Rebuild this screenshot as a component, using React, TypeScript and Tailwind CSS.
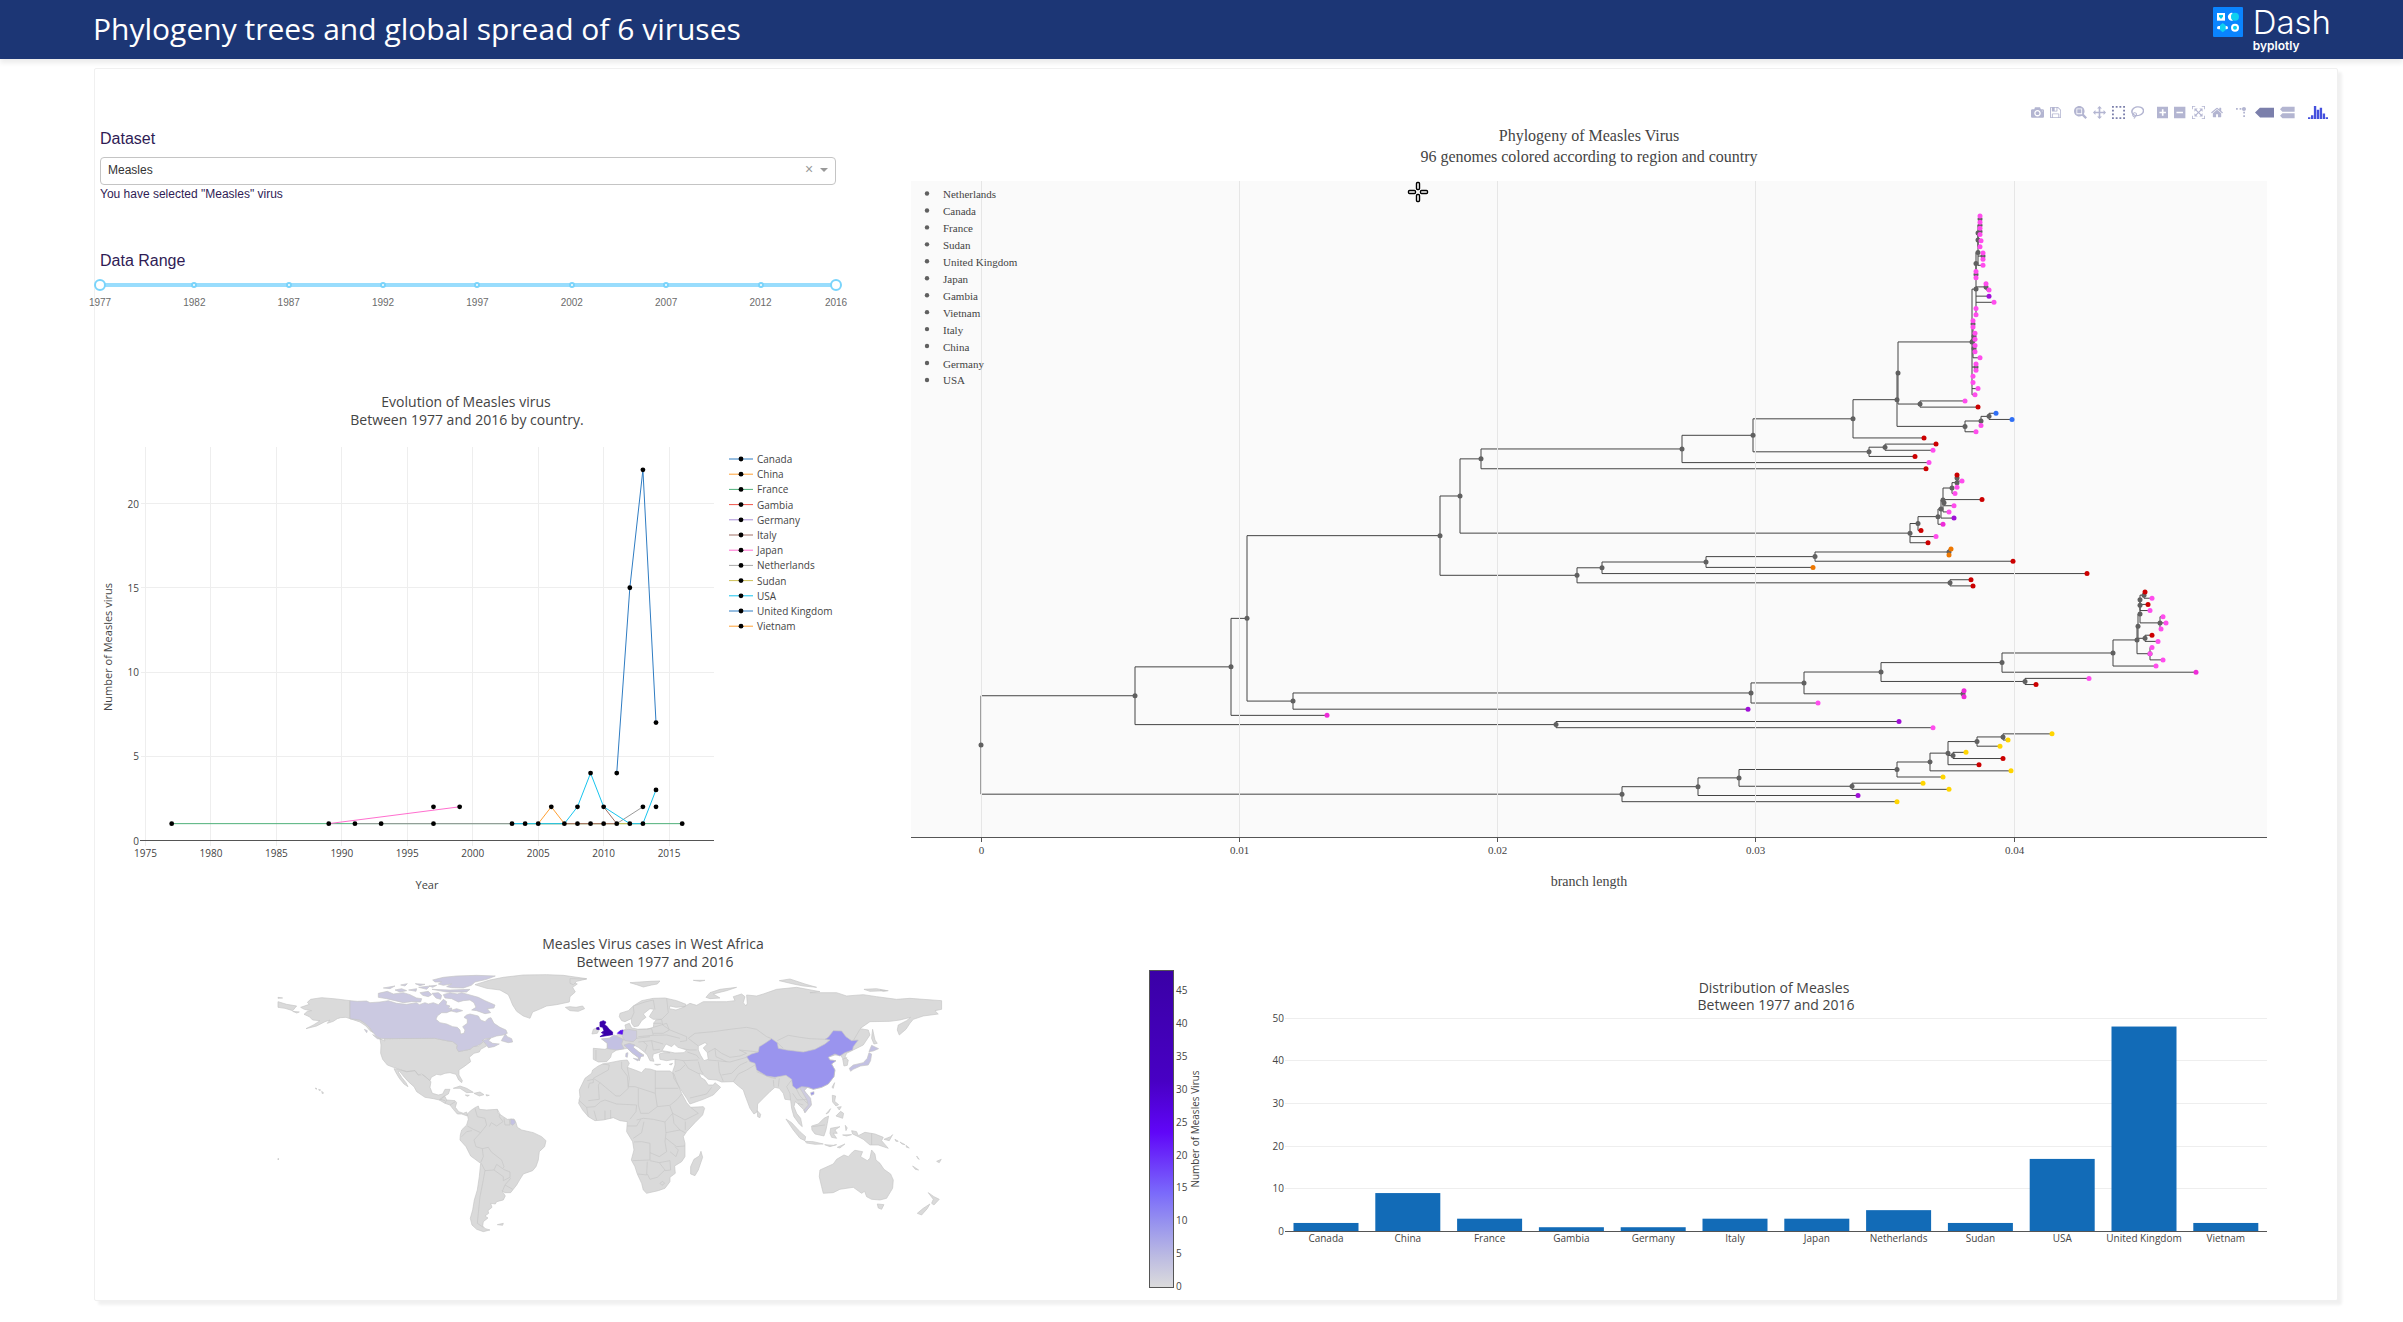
import React, { useState } from 'react';

/* ---------- shared data ---------- */

const COUNTRIES: { name: string; color: string; cases: number }[] = [
  { name: 'Canada', color: '#2f7cc2', cases: 2 },
  { name: 'China', color: '#ffa033', cases: 9 },
  { name: 'France', color: '#4fb07a', cases: 3 },
  { name: 'Gambia', color: '#f0564a', cases: 1 },
  { name: 'Germany', color: '#a98fd6', cases: 1 },
  { name: 'Italy', color: '#a07066', cases: 3 },
  { name: 'Japan', color: '#ff6fcf', cases: 3 },
  { name: 'Netherlands', color: '#a8a8a8', cases: 5 },
  { name: 'Sudan', color: '#cdbf55', cases: 2 },
  { name: 'USA', color: '#17c4ee', cases: 17 },
  { name: 'United Kingdom', color: '#2f7cc2', cases: 48 },
  { name: 'Vietnam', color: '#ffa033', cases: 2 },
];

/* ---------- header ---------- */

function DashLogo() {
  return (
    <a href="#" className="flex items-start gap-[10px] text-white" aria-label="Dash by plotly">
      <svg viewBox="0 0 90 90" className="mt-[7px] h-[30px] w-[30px]" aria-hidden="true">
        <rect width="90" height="90" rx="3" fill="#0a84ff" />
        <rect x="12" y="18" width="24" height="23" fill="#fff" />
        <path d="M18 25l3-2 3 2 3-2 3 2v4l-6 7-6-7z" fill="#00c8e6" />
        <path d="M60 18a12 12 0 1 0 0 23a16 16 0 0 1 0-23z" fill="#fff" />
        <circle cx="66" cy="29" r="12" fill="#0fd0f0" />
        <rect x="12" y="57" width="33" height="10" rx="5" fill="#fff" />
        <path d="M29 48l9 7v14l-9 7-8-7v-14z" fill="#0fd0f0" />
        <circle cx="66" cy="62" r="9" fill="#0fd0f0" stroke="#fff" strokeWidth="6" />
      </svg>
      <span className="flex flex-col pt-[5px]">
        <span className="font-['Inter'] text-[33px] leading-[34px] font-light">Dash</span>
        <span className="font-['Inter'] text-xs leading-[14px] font-semibold">byplotly</span>
      </span>
    </a>
  );
}

function Header() {
  return (
    <header className="relative flex h-[59px] justify-between bg-[#1c3675] pr-[72px] pl-[93px] shadow-[0_4px_5px_rgba(0,0,0,0.08)]">
      <h1 className="pt-[9px] font-['Open_Sans'] text-[30px] leading-[40px] font-normal text-white">
        Phylogeny trees and global spread of 6 viruses
      </h1>
      <DashLogo />
    </header>
  );
}

/* ---------- controls ---------- */

const FIRST_YEAR = 1977;
const LAST_YEAR = 2016;
const MARKS = [1977, 1982, 1987, 1992, 1997, 2002, 2007, 2012, 2016];

const THUMB =
  'pointer-events-none absolute top-0 -left-[6px] m-0 h-[12px] w-[calc(100%+12px)] appearance-none bg-transparent ' +
  '[&::-webkit-slider-thumb]:pointer-events-auto [&::-webkit-slider-thumb]:h-[12px] [&::-webkit-slider-thumb]:w-[12px] ' +
  '[&::-webkit-slider-thumb]:appearance-none [&::-webkit-slider-thumb]:rounded-full [&::-webkit-slider-thumb]:border-2 ' +
  '[&::-webkit-slider-thumb]:border-solid [&::-webkit-slider-thumb]:border-[#7ad4fb] [&::-webkit-slider-thumb]:bg-white';

function YearSlider() {
  const [from, setFrom] = useState(FIRST_YEAR);
  const [to, setTo] = useState(LAST_YEAR);
  const pct = (y: number) => ((y - FIRST_YEAR) / (LAST_YEAR - FIRST_YEAR)) * 100;
  return (
    <div>
      <div className="relative mt-[6px] h-[12px]">
        <div className="absolute inset-x-0 top-[4px] h-[4px] rounded-full bg-[#e9e9e9]" />
        <div
          className="absolute top-[4px] h-[4px] bg-[#99ddfd]"
          style={{ left: `${pct(from)}%`, width: `${pct(to) - pct(from)}%` }}
        />
        {MARKS.slice(1, -1).map((y) => (
          <span
            key={y}
            className="absolute top-[3px] h-[6px] w-[6px] -translate-x-1/2 rounded-full border-2 border-[#7ad4fb] bg-white"
            style={{ left: `${pct(y)}%` }}
          />
        ))}
        <input
          type="range"
          aria-label="First year"
          min={FIRST_YEAR}
          max={LAST_YEAR}
          value={from}
          onChange={(e) => setFrom(Math.min(Number(e.target.value), to))}
          className={THUMB}
        />
        <input
          type="range"
          aria-label="Last year"
          min={FIRST_YEAR}
          max={LAST_YEAR}
          value={to}
          onChange={(e) => setTo(Math.max(Number(e.target.value), from))}
          className={THUMB}
        />
      </div>
      <div className="relative mt-[4px] h-4 text-[10px] leading-4 text-[#6b6b6b]">
        {MARKS.map((y) => (
          <span key={y} className="absolute -translate-x-1/2" style={{ left: `${pct(y)}%` }}>
            {y}
          </span>
        ))}
      </div>
    </div>
  );
}

function Controls() {
  const [virus, setVirus] = useState('Measles');
  return (
    <section className="pt-[58px] pr-[9px] pb-[74px] pl-[5px] font-['Liberation_Sans'] text-[#2f1c55]">
      <label htmlFor="dataset" className="block text-base leading-6">
        Dataset
      </label>
      <div className="relative mt-[6px]">
        <select
          id="dataset"
          value={virus}
          onChange={(e) => setVirus(e.target.value)}
          className="block h-[28px] w-full appearance-none rounded-[4px] border border-[#c4c4c4] bg-white pb-[2px] pl-[7px] text-xs text-[#333]"
        >
          {['Measles', 'Ebola', 'Zika', 'Dengue', 'Lassa', 'Mumps'].map((v) => (
            <option key={v}>{v}</option>
          ))}
        </select>
        <button
          type="button"
          aria-label="Clear"
          className="absolute top-[5px] right-[22px] h-[14px] w-[10px] text-sm leading-[14px] text-[#999]"
        >
          ×
        </button>
        <svg viewBox="0 0 8 4" className="pointer-events-none absolute top-[11px] right-[8px] h-[4px] w-[8px]">
          <path d="M0 0h8l-4 4z" fill="#999" />
        </svg>
      </div>
      <p className="mt-px text-xs leading-4">You have selected "{virus}" virus</p>
      <h2 className="mt-[47px] text-base leading-6 font-normal">Data Range</h2>
      <YearSlider />
    </section>
  );
}

/* ---------- line chart ---------- */

const LINES: { color: string; pts: [number, number][] }[] = [
  { color: '#4fb07a', pts: [[1977, 1], [1989, 1], [2004, 1], [2016, 1]] },
  { color: '#ff6fcf', pts: [[1989, 1], [1999, 2]] },
  { color: '#9a9a9a', pts: [[1991, 1], [1993, 1], [1997, 1], [2003, 1], [2011, 1], [2013, 2]] },
  { color: '#cdbf55', pts: [[2004, 1], [2012, 1], [2013, 1]] },
  { color: '#a07066', pts: [[2007, 1], [2010, 1], [2011, 1]] },
  { color: '#a07066', pts: [[2010, 2], [2011, 1]] },
  { color: '#ffa033', pts: [[2005, 1], [2006, 2], [2007, 1]] },
  { color: '#17c4ee', pts: [[2003, 1], [2005, 1], [2007, 1], [2008, 2], [2009, 4], [2010, 2], [2012, 1], [2013, 1], [2014, 3]] },
  { color: '#2f7cc2', pts: [[2011, 4], [2012, 15], [2013, 22], [2014, 7]] },
];

const DOTS: [number, number][] = [
  ...[1977, 1989, 1991, 1993, 1997, 2003, 2004, 2005, 2007, 2008, 2009, 2010, 2011, 2012, 2013, 2016].map(
    (y): [number, number] => [y, 1],
  ),
  ...[1997, 1999, 2006, 2008, 2010, 2013, 2014].map((y): [number, number] => [y, 2]),
  [2014, 3],
  [2009, 4],
  [2011, 4],
  [2014, 7],
  [2012, 15],
  [2013, 22],
];

function EvolutionChart() {
  const X = (yr: number) => 145.5 + (yr - 1975) * 13.09;
  const Y = (n: number) => 840.5 - n * 16.85;
  return (
    <svg
      viewBox="95 385 750 520"
      className="block h-auto w-full font-['Open_Sans']"
      role="img"
      aria-label="Evolution of Measles virus"
      fill="#444"
    >
      <g fontSize="14" textAnchor="middle">
        <text x="466" y="407">Evolution of Measles virus</text>
        <text x="467" y="425">Between 1977 and 2016 by country.</text>
      </g>
      <g stroke="#eee" shapeRendering="crispEdges">
        {[1975, 1980, 1985, 1990, 1995, 2000, 2005, 2010, 2015].map((y) => (
          <path key={y} d={`M${X(y)} 447V846`} />
        ))}
        {[5, 10, 15, 20].map((n) => (
          <path key={n} d={`M141 ${Y(n)}H714`} />
        ))}
      </g>
      <path d="M140 840.5H714" stroke="#555" shapeRendering="crispEdges" />
      {LINES.map((l, i) => (
        <polyline key={i} points={l.pts.map(([a, b]) => `${X(a)},${Y(b)}`).join(' ')} fill="none" stroke={l.color} />
      ))}
      {DOTS.map(([a, b], i) => (
        <circle key={i} cx={X(a)} cy={Y(b)} r="2.4" fill="#000" />
      ))}
      <g fontSize="10">
        {[1975, 1980, 1985, 1990, 1995, 2000, 2005, 2010, 2015].map((y) => (
          <text key={y} x={X(y)} y="857" textAnchor="middle">
            {y}
          </text>
        ))}
        {[0, 5, 10, 15, 20].map((n) => (
          <text key={n} x="139" y={Y(n) + 4} textAnchor="end">
            {n}
          </text>
        ))}
        {COUNTRIES.map((c, i) => (
          <g key={c.name}>
            <path d={`M729 ${459 + i * 15.2}h24`} stroke={c.color} />
            <circle cx="741" cy={459 + i * 15.2} r="2.4" fill="#000" />
            <text x="757" y={463 + i * 15.2}>
              {c.name}
            </text>
          </g>
        ))}
      </g>
      <g fontSize="11" textAnchor="middle">
        <text x="427" y="889">Year</text>
        <text transform="translate(112 647) rotate(-90)">Number of Measles virus</text>
      </g>
    </svg>
  );
}

/* ---------- phylogeny tree ---------- */

const PINK = '#ff4ded';
const MAG = '#ee2bd8';
const RED = '#cc0000';
const PURPLE = '#a010d8';
const BLUE = '#2f6ff5';
const ORANGE = '#ee7700';
const YELLOW = '#ffd500';

type Tree = [number, string] | [number, Tree[]];
const p = (...xs: number[]): Tree[] => xs.map((x): Tree => [x, PINK]);

const TOP_CLADE: Tree = [1972, [
  [1976, [
    [1976, [
      [1978, [
        [1978, [[1978, [[1980, [[1980, p(1980, 1980)], [1980, p(1980, 1980)]]], [1981, PINK]]], [1980, PINK]]],
        [1983, p(1983, 1983)],
        [1983, PINK],
      ]],
      [1976, p(1976, 1976)],
    ]],
    [1986, p(1986, 1989)],
    [1989, PURPLE],
    [1994, PINK],
    ...p(1976, 1976),
  ]],
  [1973, [[1973, p(1973, 1973)], [1974, p(1975, 1975)], [1974, p(1975, 1975)], [1980, PINK]]],
  [1976, p(1976, 1976)],
  ...p(1973, 1973, 1978, 1975),
]];

const UPPER: Tree = [1440, [
  [1460, [
    [1481, [
      [1682, [
        [1753, [
          [1853, [
            [1897, [
              [1898, [TOP_CLADE, [1920, [[1965, PINK], [1978, RED]]]]],
              [1965, [[1981, [[1989, [[1996, BLUE], [2012, BLUE]]], [1981, PINK]]], [1976, PINK]]],
            ]],
            [1924, RED],
          ]],
          [1869, [[1885, [[1936, RED], [1933, PINK]]], [1915, RED]]],
        ]],
        [1929, PINK],
      ]],
      [1926, RED],
    ]],
    [1910, [
      [1918, [
        [1938, [
          [1941, [
            [1943, [
              [1952, [[1957, [[1957, [[1957, RED], [1962, PINK]]], [1957, PINK]]], [1955, PINK]]],
              [1944, [[1982, RED], [1954, PINK]]],
              [1949, PINK],
            ]],
            [1954, PURPLE],
          ]],
          [1943, MAG],
        ]],
        [1921, RED],
      ]],
      [1936, PINK],
      [1928, RED],
    ]],
  ]],
  [1577, [
    [1602, [
      [1706, [[1815, [[1949, [[1951, ORANGE], [1949, ORANGE]]], [2013, RED]]], [1813, ORANGE]]],
      [2087, RED],
    ]],
    [1950, [[1971, RED], [1973, RED]]],
  ]],
]];

const MIDDLE: Tree = [1293, [
  [1751, [
    [1804, [
      [1881, [
        [2002, [
          [2113, [
            [2137, [
              [2138, [
                [2140, [
                  [2140, [[2140, [[2144, [[2145, RED], [2152, PINK]]], [2148, RED]]], [2150, PINK]]],
                  [2160, p(2163, 2166, 2161)],
                ]],
                [2145, [[2152, RED], [2158, PINK]]],
              ]],
              [2150, p(2152, 2150, 2163)],
            ]],
            [2156, PINK],
          ]],
          [2196, MAG],
        ]],
        [2025, [[2089, PINK], [2036, RED]]],
      ]],
      [1963, [[1964, MAG], [1964, MAG]]],
    ]],
    [1818, PINK],
  ]],
  [1748, PURPLE],
]];

const LOWER: Tree = [1622, [
  [1698, [
    [1739, [
      [1897, [
        [1930, [
          [1948, [
            [1977, [[2003, [[2052, YELLOW], [2008, YELLOW]]], [2000, YELLOW]]],
            [1953, [[1966, YELLOW], [2003, RED]]],
            [1979, RED],
          ]],
          [2011, YELLOW],
        ]],
        [1943, YELLOW],
      ]],
      [1852, [[1923, YELLOW], [1949, YELLOW]]],
    ]],
    [1858, PURPLE],
  ]],
  [1897, YELLOW],
]];

const ROOT: Tree = [981, [
  [1135, [[1231, [[1247, [UPPER, MIDDLE]], [1327, MAG]]], [1556, [[1899, PURPLE], [1933, PINK]]]]],
  LOWER,
]];

interface Laid {
  lines: string[];
  nodes: { x: number; y: number; color: string }[];
}

/* Leaves take evenly spaced rows; each parent sits midway between its outer children. */
function layTree(root: Tree, top: number, step: number): Laid {
  const out: Laid = { lines: [], nodes: [] };
  let row = 0;
  const place = (t: Tree): number => {
    const [x, rest] = t;
    if (typeof rest === 'string') {
      const y = top + step * row++;
      out.nodes.push({ x, y, color: rest });
      return y;
    }
    const ys = rest.map((c) => {
      const y = place(c);
      out.lines.push(`M${x} ${y}H${c[0]}`);
      return y;
    });
    const first = ys[0];
    const last = ys[ys.length - 1];
    out.lines.push(`M${x} ${first}V${last}`);
    const mid = (first + last) / 2;
    out.nodes.unshift({ x, y: mid, color: '#606060' });
    return mid;
  };
  place(root);
  return out;
}

const TREE = layTree(ROOT, 216, 6.165);

const TREE_LEGEND = [
  'Netherlands', 'Canada', 'France', 'Sudan', 'United Kingdom', 'Japan',
  'Gambia', 'Vietnam', 'Italy', 'China', 'Germany', 'USA',
];

function PhylogenyChart() {
  const ticks: [number, string][] = [[981.5, '0'], [1239.5, '0.01'], [1497.5, '0.02'], [1755.5, '0.03'], [2014.5, '0.04']];
  return (
    <svg
      viewBox="845 120 1492 785"
      className="block h-auto w-full font-['Liberation_Serif']"
      role="img"
      aria-label="Phylogeny of Measles Virus"
      fill="#444"
    >
      <rect x="911" y="181" width="1356" height="656" fill="#fafafa" />
      <path d={TREE.lines.join('')} fill="none" stroke="#444" />
      <g stroke="#e6e6e6" shapeRendering="crispEdges">
        {ticks.map(([x]) => (
          <path key={x} d={`M${x} 181V837`} />
        ))}
      </g>
      <g stroke="#555" shapeRendering="crispEdges">
        <path d="M911 837.5H2267" />
        {ticks.map(([x]) => (
          <path key={x} d={`M${x} 838v4`} />
        ))}
      </g>
      {TREE.nodes.map((n, i) => (
        <circle key={i} cx={n.x} cy={n.y} r="2.5" fill={n.color} />
      ))}
      <g fontSize="16" textAnchor="middle">
        <text x="1589" y="141">Phylogeny of Measles Virus</text>
        <text x="1589" y="162">96 genomes colored according to region and country</text>
      </g>
      <g fontSize="11">
        {TREE_LEGEND.map((c, i) => (
          <g key={c}>
            <circle cx="927" cy={193.5 + i * 16.95} r="2.2" fill="#606060" />
            <text x="943" y={198 + i * 16.95}>
              {c}
            </text>
          </g>
        ))}
        {ticks.map(([x, t]) => (
          <text key={t} x={x} y="854" textAnchor="middle">
            {t}
          </text>
        ))}
      </g>
      <text x="1589" y="886" fontSize="14" textAnchor="middle">
        branch length
      </text>
      <g fill="#fff" stroke="#000" strokeWidth="1.4">
        <rect x="1416.5" y="182.5" width="3" height="7" rx="1" />
        <rect x="1416.5" y="194.5" width="3" height="7" rx="1" />
        <rect x="1408.5" y="190.5" width="7" height="3" rx="1" />
        <rect x="1420.5" y="190.5" width="7" height="3" rx="1" />
      </g>
    </svg>
  );
}

/* ---------- toolbar ---------- */

interface Tool {
  label: string;
  w: number;
  d: string;
  active?: boolean;
  spike?: boolean;
  brand?: boolean;
}

const TOOLS: Tool[][] = [
  [
    { label: 'Download plot as a png', w: 1000, d: 'm500 450c-83 0-150-67-150-150 0-83 67-150 150-150 83 0 150 67 150 150 0 83-67 150-150 150z m400 150h-120c-16 0-34 13-39 29l-31 93c-6 15-23 28-40 28h-340c-16 0-34-13-39-28l-31-94c-6-15-23-28-40-28h-120c-55 0-100-45-100-100v-450c0-55 45-100 100-100h800c55 0 100 45 100 100v450c0 55-45 100-100 100z m-400-550c-138 0-250 112-250 250 0 138 112 250 250 250 138 0 250-112 250-250 0-138-112-250-250-250z m365 380c-19 0-35 16-35 35 0 19 16 35 35 35 19 0 35-16 35-35 0-19-16-35-35-35z' },
    { label: 'Save and edit plot', w: 857, d: 'm214-7h429v214h-429v-214z m500 0h72v500q0 8-6 21t-11 20l-157 156q-5 6-19 12t-22 5v-232q0-22-15-38t-38-16h-322q-22 0-37 16t-16 38v232h-72v-714h72v232q0 22 16 38t37 16h465q22 0 38-16t15-38v-232z m-214 518v178q0 8-5 13t-13 6h-107q-7 0-13-6t-5-13v-178q0-7 5-13t13-5h107q7 0 13 5t5 13z m357-18v-518q0-22-15-38t-38-16h-750q-23 0-38 16t-16 38v750q0 22 16 38t38 16h517q23 0 50-12t42-26l156-157q16-15 27-42t11-49z' },
  ],
  [
    { label: 'Zoom', w: 1000, d: 'm1000-25l-250 251c40 63 63 138 63 218 0 224-182 406-407 406-224 0-406-182-406-406s183-406 407-406c80 0 155 22 218 62l250-250 125 125z m-812 250l0 438 437 0 0-438-437 0z m62 375l313 0 0-312-313 0 0 312z' },
    { label: 'Pan', w: 1000, d: 'm1000 350l-187 188 0-125-250 0 0 250 125 0-188 187-187-187 125 0 0-250-250 0 0 125-188-188 186-187 0 125 252 0 0-250-125 0 187-188 188 188-125 0 0 250 250 0 0-126 187 188z' },
    { label: 'Box select', w: 1000, active: true, d: 'm0 850l0-143 143 0 0 143-143 0z m286 0l0-143 143 0 0 143-143 0z m285 0l0-143 143 0 0 143-143 0z m286 0l0-143 143 0 0 143-143 0z m-857-286l0-143 143 0 0 143-143 0z m857 0l0-143 143 0 0 143-143 0z m-857-285l0-143 143 0 0 143-143 0z m857 0l0-143 143 0 0 143-143 0z m-857-286l0-143 143 0 0 143-143 0z m286 0l0-143 143 0 0 143-143 0z m285 0l0-143 143 0 0 143-143 0z m286 0l0-143 143 0 0 143-143 0z' },
    { label: 'Lasso select', w: 1031, d: 'm1018 538c-36 207-290 336-568 286-277-48-473-256-436-463 10-57 36-108 76-151-13-66 11-137 68-183 34-28 75-41 114-42l-55-70 0 0c-2-1-3-2-4-3-10-14-8-34 5-45 14-11 34-8 45 4 1 1 2 3 2 5l0 0 113 140c16 11 31 24 45 40 4 3 6 7 8 11 48-3 100 0 151 9 278 48 473 255 436 462z m-624-379c-80 14-149 48-197 96 42 42 109 47 156 9 33-26 47-66 41-105z m-187-74c-19 16-33 37-39 60 50-32 109-55 174-68-42-25-95-24-135 8z m360 75c-34-7-69-9-102-8 8 62-16 128-68 170-73 59-175 54-244-5-9 20-16 40-20 61-28 159 121 317 333 354s407-60 434-217c28-159-121-318-333-355z' },
  ],
  [
    { label: 'Zoom in', w: 875, d: 'm1 787l0-875 875 0 0 875-875 0z m687-500l-187 0 0-187-125 0 0 187-188 0 0 125 188 0 0 187 125 0 0-187 187 0 0-125z' },
    { label: 'Zoom out', w: 875, d: 'm0 788l0-876 875 0 0 876-875 0z m688-500l-500 0 0 125 500 0 0-125z' },
    { label: 'Autoscale', w: 1000, d: 'm250 850l-187 0-63 0 0-62 0-188 63 0 0 188 187 0 0 62z m688 0l-188 0 0-62 188 0 0-188 62 0 0 188 0 62-62 0z m-875-938l0 188-63 0 0-188 0-62 63 0 187 0 0 62-187 0z m875 188l0-188-188 0 0-62 188 0 62 0 0 62 0 188-62 0z m-125 188l-1 0-93-94-156 156 156 156 92-93 2 0 0 250-250 0 0-2 93-92-156-156-156 156 94 92 0 2-250 0 0-250 0 0 93 93 157-156-157-156-93 94 0 0 0-250 250 0 0 0-94 93 156 157 156-157-93-93 0 0 250 0 0 250z' },
    { label: 'Reset axes', w: 929, d: 'm786 296v-267q0-15-11-26t-25-10h-214v214h-143v-214h-214q-15 0-25 10t-11 26v267q0 1 0 2t0 2l321 264 321-264q1-1 1-4z m124 39l-34-41q-5-5-12-6h-2q-7 0-12 3l-386 322-386-322q-7-4-13-4-7 2-12 7l-35 41q-4 5-3 13t6 12l401 334q18 15 42 15t43-15l136-114v109q0 8 5 13t13 5h107q8 0 13-5t5-13v-227l122-102q5-5 6-12t-4-13z' },
  ],
  [
    { label: 'Toggle spike lines', w: 1000, spike: true, d: 'M512 409c0-57-46-104-103-104-57 0-104 47-104 104 0 57 47 103 104 103 57 0 103-46 103-103z m-327-39l92 0 0 92-92 0z m-185 0l92 0 0 92-92 0z m370-186l92 0 0 93-92 0z m0-184l92 0 0 92-92 0z' },
    { label: 'Show closest data on hover', w: 1500, active: true, d: 'm375 725l0 0-375-375 375-374 0-1 1125 0 0 750-1125 0z' },
    { label: 'Compare data on hover', w: 1125, d: 'm187 786l0 2-187-188 188-187 0 0 937 0 0 373-938 0z m0-499l0 1-187-188 188-188 0 0 937 0 0 376-938-1z' },
  ],
  [
    { label: 'Produced with Plotly', w: 1542, brand: true, d: 'm0-10h182v-140h-182v140z m228 146h183v-286h-183v286z m225 714h182v-1000h-182v1000z m225-285h182v-715h-182v715z m225 142h183v-857h-183v857z m231-428h182v-429h-182v429z m225-291h183v-138h-183v138z' },
  ],
];

function ModeBar() {
  return (
    <div className="flex h-[51px] items-end justify-end gap-[13px] pr-[9px] pb-[1px]" role="toolbar" aria-label="Plot tools">
      {TOOLS.map((group, g) => (
        <div key={g} className="flex gap-[6px]">
          {group.map((t) => (
            <button key={t.label} type="button" aria-label={t.label} className="block">
              <svg
                viewBox={`0 0 ${t.w} 1000`}
                className="block h-[13px] w-auto"
                fill={t.brand ? '#4450dd' : t.active ? '#7b7fab' : '#b3b5d1'}
              >
                <path d={t.d} transform={t.spike ? 'matrix(1.5 0 0 -1.5 0 850)' : 'matrix(1 0 0 -1 0 850)'} />
              </svg>
            </button>
          ))}
        </div>
      ))}
    </div>
  );
}

/* ---------- world map ---------- */

const CANADA =
  'M240 92L262 94 290 93 300 98 330 96 355 92 380 100 410 103 440 98 448 104 465 98 475 102 490 98 505 104 513 96 520 88 530 95 528 104 540 108 535 115 545 114 545 122 530 128 515 128 502 138 498 148 510 158 530 162 548 170 562 172 570 180 572 192 582 190 585 180 578 170 592 160 592 148 582 142 590 135 600 132 625 138 632 150 645 155 655 145 663 143 672 160 690 172 708 180 712 190 700 195 680 198 660 205 645 206 636 212 650 208 662 205 656 212 668 220 688 222 672 230 655 233 648 222 640 214 632 222 620 228 610 230 600 238 580 242 566 245 560 235 562 225 548 215 530 212 510 208 495 205 342 206 330 205 318 198 310 188 298 172 285 160 270 150 240 146Z' +
  'M694 212L700 202 706 192 712 200 725 206 728 216 715 218 700 214Z' +
  'M562 72L575 68 600 75 625 82 645 92 675 105 672 114 652 116 662 128 645 131 620 122 605 120 618 112 612 98 600 90 580 92 565 96 545 86 525 84 520 74 540 68Z' +
  'M488 30L520 22 560 18 620 16 676 18 650 28 615 36 604 46 580 54 545 53 530 50 545 42 520 46 505 42 515 36 495 36Z' +
  'M325 70L352 64 370 72 400 68 420 74 440 84 455 86 452 96 425 95 400 98 375 92 350 86 325 82Z' +
  'M340 54L375 48 360 56ZM392 45L412 41 405 48ZM436 41L465 43 450 47ZM375 60L395 56 410 62 390 66ZM416 60L440 56 438 64ZM450 68L475 64 485 74 475 80 458 76ZM486 70L505 68 515 76 512 88 498 84ZM486 58L540 60 600 58 590 66 530 66ZM540 122L560 116 578 122 560 127ZM500 46L478 48 488 52ZM446 52L480 48 470 58Z' +
  'M308 194L322 202 334 208 322 206ZM283 178L292 182 290 188Z';

const LAND_WEST =
  'M240 92L200 87 155 83 122 88 112 97 118 103 92 112 103 118 125 122 112 124 102 133 118 140 128 150 150 152 132 164 108 176 140 168 165 155 180 150 172 160 190 154 202 146 212 143 228 142 240 146Z' +
  'M240 146L270 150 285 160 298 172 310 188 300 182 288 168 270 156Z' +
  'M24 95L50 103 80 108 68 122 45 115 24 112ZM24 82L38 84 24 85ZM68 124L88 126 80 129Z' +
  'M330 206L345 213 342 206 495 205 510 208 530 212 548 215 562 225 560 235 566 245 580 242 600 238 610 230 625 228 632 222 642 214 650 228 632 238 628 246 612 250 598 262 602 275 582 290 567 300 567 315 577 332 575 338 566 330 558 313 540 308 525 310 512 315 500 313 484 322 480 332 466 320 455 312 445 315 435 302 410 305 385 297 370 292 352 285 338 268 332 250 333 225Z' +
  'M372 296L390 300 410 305 435 302 445 315 458 314 468 322 483 335 480 352 487 370 505 375 518 372 525 358 540 358 535 372 524 378 515 386 508 390 490 386 465 382 440 365 432 350 415 335 400 318 388 303 385 306 395 322 408 338 414 350 402 342 388 325 378 308Z' +
  'M508 390L515 384 524 378 530 390 555 392 560 398 556 412 566 425 580 430 590 426 592 438 575 432 562 432 550 418 540 405 525 400Z' +
  'M550 355L570 348 590 355 610 367 590 368 570 355ZM612 370L630 366 642 374 628 378ZM586 375L598 376 592 379ZM648 374L658 376 650 378Z' +
  'M136 354l5 2-3 2zM146 358l6 2-4 2zM155 364l6 5-4 2zM24 565l3 2-3 3z' +
  'M592 432L602 422 615 413 625 408 628 418 650 420 682 418 685 430 700 440 712 448 732 447 738 458 742 472 755 480 790 488 815 500 828 512 824 530 808 545 805 570 798 590 788 602 760 612 750 628 740 645 722 668 705 668 696 662 706 678 700 690 680 695 676 702 662 700 666 712 654 722 656 730 645 738 654 744 640 755 638 768 646 776 660 780 640 785 620 778 606 765 601 745 608 720 613 690 622 660 628 620 632 580 602 558 588 530 570 510 571 495 575 480 590 465 595 448Z' +
  'M682 764L700 760 698 766Z' +
  'M615 44L660 30 700 22 760 15 830 14 880 16 950 26 905 34 922 42 908 52 916 66 900 80 898 96 860 104 830 108 808 118 788 126 780 145 760 138 740 124 728 105 722 90 715 74 690 60 650 55Z' +
  'M886 112L900 110 918 112 938 108 944 116 925 124 900 122Z';

const BORDERS_WEST =
  'M592 468L610 478 632 488 M575 500L590 485 606 482 M615 415L622 440 645 445 650 465 632 488 612 510 618 530 637 536 640 560 632 578' +
  'M682 418L690 432 688 440 699 455 680 468 664 458 658 470 M718 448L720 465 705 465 702 445 M637 536L655 532 664 546 695 570 702 590 698 596 680 583 672 600 645 602 634 580' +
  'M645 602L638 640 630 680 626 720 622 760 640 772 M672 600L700 620 700 632 720 622 720 606 700 598 M722 625L705 645 698 662 M705 645L728 658' +
  'M512 388L525 392 M530 390L525 400 M556 395L540 405';

const LAND_EAST =
  'M70 178L80 174 86 182 82 190 66 192Z' +
  'M180 38L210 36 240 34 270 33 262 42 245 45 220 51 200 44ZM370 31L405 31 390 34ZM0 26L50 27 20 34 10 44 0 40Z' +
  'M148 140L150 130 175 122 190 108 215 92 250 85 285 84 320 92 348 103 345 110 318 112 300 108 298 116 318 120 340 112 360 100 380 106 400 95 440 95 470 95 495 92 490 80 515 72 525 80 520 98 528 108 532 100 530 75 560 78 580 72 620 58 680 52 750 65 720 68 800 68 830 78 880 74 920 80 980 88 1020 85 1060 88 1115 92 1115 118 1095 122 1105 132 1060 138 1030 148 1020 160 1008 178 988 195 982 180 985 165 1010 152 1022 142 990 150 960 154 900 155 870 176 895 180 900 195 880 225 850 240 830 250 825 262 835 270 832 286 822 288 818 265 812 256 795 255 775 262 780 270 798 272 785 282 795 300 792 320 775 342 755 352 730 358 712 352 702 360 710 375 722 392 724 405 705 428 700 418 690 408 682 400 676 395 672 410 680 430 692 445 697 470 688 462 672 440 665 415 662 390 645 388 640 370 628 355 615 352 600 365 580 385 563 402 562 425 552 432 540 415 525 375 520 360 505 348 490 335 455 336 440 330 415 328 400 315 388 310 392 322 405 330 415 345 430 345 435 338 452 352 430 375 400 388 360 402 350 385 330 355 312 325 308 305 315 285 315 268 290 272 270 268 268 252 280 248 300 248 278 244 265 248 250 252 248 262 252 274 240 272 232 255 222 245 205 232 190 224 182 227 205 245 222 255 212 258 208 272 205 262 188 250 172 235 155 238 140 240 125 250 122 262 110 275 85 276 70 268 70 235 105 238 112 235 112 220 95 207 130 203 145 192 160 180 168 178 165 165 178 160 185 174 205 178 230 178 250 172 252 158 258 150 275 148 250 148 238 140 245 128 252 118 240 116 220 132 228 142 215 152 205 168 192 170 185 160 184 146 165 155 155 152Z' +
  'M98 282L120 278 150 272 172 270 178 280 172 292 195 300 215 308 225 296 240 297 260 303 300 303 312 312 320 335 335 370 350 398 362 412 400 410 404 415 398 435 375 458 350 485 340 500 345 520 345 560 335 575 314 588 316 610 300 622 300 635 285 655 265 662 230 670 220 660 215 640 202 612 195 590 184 570 192 540 188 515 170 485 172 455 150 452 130 443 100 450 75 452 55 440 38 420 26 400 30 380 28 360 45 325 65 310 68 300 85 288Z' +
  'M393 544L398 562 385 600 375 617 362 612 362 590 372 568 388 558Z' +
  'M648 447L665 458 690 485 707 500 705 512 690 505 670 480ZM705 514L730 515 760 522 735 523 710 519Z' +
  'M725 468L745 462 762 445 776 438 772 460 768 480 762 498 735 492 726 480Z' +
  'M782 475L810 470 795 480 802 490 790 490 800 505 785 502 780 490Z' +
  'M845 482L860 485 865 497 885 487 915 492 940 502 935 512 955 535 925 525 900 525 880 508 865 500 848 492Z' +
  'M787 376L797 378 794 394 806 404 798 408 788 396ZM798 438L812 424 821 430 818 445ZM786 352L794 338 790 355ZM768 432L782 416 776 428ZM802 412L814 410 808 420Z' +
  'M562 422L572 433 570 443 563 440ZM764 524L790 526 800 524 780 530ZM802 532L825 522 810 534ZM826 466L832 474 828 482ZM818 495L845 494 830 498ZM942 508L962 500 968 494 958 512ZM975 508L985 514 978 514ZM990 516L1005 524 996 522ZM1008 526L1018 534 1010 532ZM1040 558L1048 568 1044 566ZM1028 588L1046 600 1036 598ZM1100 574L1114 568 1108 578Z' +
  'M1075 668L1092 680 1108 688 1092 705 1085 700 1090 688ZM1080 702L1072 716 1055 735 1042 730 1060 715Z' +
  'M922 702L942 704 935 718 925 714Z' +
  'M750 600L790 582 800 568 822 555 835 560 848 546 855 541 878 545 872 560 892 572 900 565 905 540 915 552 918 570 930 580 942 598 962 612 970 630 968 655 950 685 930 690 905 688 890 680 884 664 875 670 850 652 810 658 790 668 760 670 755 650 748 620Z' +
  'M408 82L420 68 450 58 500 52 470 62 430 72 450 84 420 86ZM628 32L660 27 705 42 740 52 700 48 670 42ZM882 58L920 56 950 62 900 64ZM930 60L955 62 940 64Z' +
  'M908 178L915 210 922 220 912 222 905 205ZM254 283L272 283 262 286ZM298 283L308 280 304 285Z';

const BORDERS_EAST =
  'M98 282L118 285 115 300 70 325 M52 332L70 328 70 338 58 340 55 355 M70 325L90 338 85 345 88 388 55 392 M90 338L138 378 150 378 175 355' +
  'M155 275L155 295 172 318 175 355 M172 292L178 325 175 350 195 350 256 370 256 303 M256 355L325 355' +
  'M205 355L205 405 212 430 236 430 262 410 256 370 M262 410L300 406 322 388 335 372 M140 402L200 405 198 425 180 448 M122 420L122 446' +
  'M105 422L105 450 M72 422L80 450 M92 395L105 390 140 402 M92 395L75 410 50 412 26 390 M50 412L55 440 M200 450L220 445 250 448 285 456 308 430 300 408' +
  'M172 468L200 468 212 448 M222 455L215 488 190 505 M192 516L215 515 240 520 240 570 188 572 M285 456L288 490 285 515 290 545 268 560 240 548' +
  'M288 488L330 480 345 488 M288 505L320 530 345 528 M300 545L318 560 325 540 315 530 M232 575L230 615 204 612 M232 612L240 628 262 622 285 600 268 578 240 572' +
  'M268 578L300 572 302 600 285 602 M308 430L345 450 385 430 362 412 M308 430L312 460 330 480 M346 455L346 480 M270 640L278 634 284 640 276 646Z' +
  'M315 268L340 272 385 270 M352 246L380 256 388 266 M340 272L355 295 388 312 M315 305L330 300 345 285 M360 384L410 372 425 352 M385 275L392 300 400 312' +
  'M415 270L440 272 480 276 530 262 M445 275L448 305 460 334 M455 315L485 310 510 285 532 275 M490 335L505 312 530 300 555 285' +
  'M560 305L600 322 618 326 M610 330L612 350 M628 325L625 350 M665 330L650 350 660 370 662 390 M680 358L690 378 712 400 M668 370L682 390 712 388 M700 405L684 400' +
  'M355 205L375 190 430 185 480 178 530 172 560 178 590 200 605 206 M355 205L368 215 385 228 M412 248L435 235 455 250 480 262 510 258 530 250 508 240 565 246' +
  'M435 235L438 260 470 275 M622 212L655 196 690 202 720 206 765 208 M622 218L640 235 M850 212L870 178' +
  'M205 178L245 176 250 196 205 200 M250 172L290 160 298 180 280 190 250 190 M290 85L295 128 275 148 278 165 300 180 350 200 350 212 330 215' +
  'M250 196L290 195 330 205 M205 216L245 212 280 222 M200 205L240 200 M225 245L232 225 220 215 M245 212L250 240 270 238 M190 108L225 96 250 90 255 118 M184 146L192 128 190 108' +
  'M78 240L78 270 M158 210L200 205 M250 160L275 160 M330 235L360 240 380 240 M905 490L905 525 M728 470L765 465 M818 268L832 262';

function World() {
  return (
    <g transform="translate(270 970) scale(0.3333)" stroke="#c6c6c6" strokeWidth="2" strokeLinejoin="round">
      <g fill="#dadada">
        <path d={LAND_WEST} />
        <path d={BORDERS_WEST} fill="none" />
      </g>
      <path d={CANADA} fill="#cbc9e1" />
      <path d="M722 447L734 450 736 458 728 466 722 462Z" fill="#c3c1e3" />
      <g transform="translate(900 0)" fill="#dadada">
        <path d={LAND_EAST} />
        <path d={BORDERS_EAST} fill="none" />
        <path d="M276 242L288 222 305 230 313 222 324 232 350 240 342 248 315 249 295 245ZM385 228L405 218 412 222 400 234 412 248 415 268 402 272 392 256 385 240Z" fill="#fff" />
        <path d="M95 207L118 205 132 195 160 208 155 222 162 236 140 240 112 236 112 220ZM162 225L178 220 195 225 190 232 205 245 222 258 212 260 208 272 205 262 188 250 172 235ZM168 250L174 248 172 262 167 260ZM190 265L206 268 204 273ZM838 295L850 285 880 278 892 265 897 248 905 252 902 272 895 285 872 288 850 298 842 304ZM897 245L905 226 926 236 910 243Z" fill="#c3c1e3" />
        <path d="M160 182L175 178 200 182 200 205 190 215 165 212 158 200ZM695 350L712 352 703 362 722 385 724 405 705 428 702 420 715 405 710 388 698 368 690 355Z" fill="#cecce0" />
        <path d="M530 260L545 252 565 246 568 230 585 220 605 206 622 218 625 235 650 240 700 246 735 238 765 222 780 210 765 208 775 202 790 182 815 183 828 200 845 212 865 210 850 230 848 240 825 248 810 258 795 252 775 262 780 270 798 272 785 282 795 300 792 320 775 342 755 352 730 358 715 352 695 350 680 358 668 348 665 328 648 316 615 322 590 318 560 300 555 280 540 275ZM722 368L732 365 732 373 724 376Z" fill="#9a94ee" />
        <path d="M142 190L150 182 159 180 157 193Z" fill="#5a10f0" stroke="#5a10f0" />
        <path d="M90 156L100 152 108 156 104 164 110 168 118 178 128 186 128 194 110 197 90 200 102 192 94 188 102 182 98 172 90 170ZM80 173L87 172 88 179 80 178Z" fill="#3a00aa" stroke="#3a00aa" />
      </g>
    </g>
  );
}

function MapChart() {
  return (
    <svg
      viewBox="95 905 1125 395"
      className="block h-auto w-full font-['Open_Sans']"
      role="img"
      aria-label="Measles Virus cases in West Africa"
      fill="#444"
    >
      <defs>
        <linearGradient id="scale" x1="0" y1="1" x2="0" y2="0">
          <stop offset="0" stopColor="#dcdcdc" />
          <stop offset="0.1" stopColor="#bbbae2" />
          <stop offset="0.2" stopColor="#9894ee" />
          <stop offset="0.3" stopColor="#7a69fb" />
          <stop offset="0.49" stopColor="#6006f8" />
          <stop offset="0.65" stopColor="#4800c4" />
          <stop offset="1" stopColor="#3a00a6" />
        </linearGradient>
      </defs>
      <World />
      <g fontSize="14" textAnchor="middle">
        <text x="653" y="949">Measles Virus cases in West Africa</text>
        <text x="655" y="967">Between 1977 and 2016</text>
      </g>
      <rect x="1149.5" y="970.5" width="24" height="317" fill="url(#scale)" stroke="#555" />
      <g fontSize="10">
        {[0, 5, 10, 15, 20, 25, 30, 35, 40, 45].map((n) => (
          <text key={n} x="1176" y={1290 - n * 6.57}>
            {n}
          </text>
        ))}
        <text transform="translate(1199 1129) rotate(-90)" textAnchor="middle">
          Number of Measles Virus
        </text>
      </g>
    </svg>
  );
}

/* ---------- bar chart ---------- */

function DistributionChart() {
  const Y = (n: number) => 1231.5 - n * 4.27;
  return (
    <svg
      viewBox="1220 905 1117 395"
      className="block h-auto w-full font-['Open_Sans']"
      role="img"
      aria-label="Distribution of Measles"
      fill="#444"
    >
      <g fontSize="14" textAnchor="middle">
        <text x="1774" y="993">Distribution of Measles</text>
        <text x="1776" y="1010">Between 1977 and 2016</text>
      </g>
      <g stroke="#eee" shapeRendering="crispEdges">
        {[10, 20, 30, 40, 50].map((n) => (
          <path key={n} d={`M1285 ${Y(n)}H2267`} />
        ))}
      </g>
      {COUNTRIES.map((c, i) => (
        <rect key={c.name} x={1293.5 + i * 81.8} y={Y(c.cases)} width="65" height={c.cases * 4.27} fill="#126bb7" />
      ))}
      <path d="M1285 1231.5H2267" stroke="#555" shapeRendering="crispEdges" />
      <g fontSize="10">
        {[0, 10, 20, 30, 40, 50].map((n) => (
          <text key={n} x="1284" y={Y(n) + 3.5} textAnchor="end">
            {n}
          </text>
        ))}
        <g textAnchor="middle">
          {COUNTRIES.map((c, i) => (
            <text key={c.name} x={1326 + i * 81.8} y="1242">
              {c.name}
            </text>
          ))}
        </g>
      </g>
    </svg>
  );
}

/* ---------- page ---------- */

export default function App() {
  return (
    <div className="bg-white pb-[20px]">
      <Header />
      <main className="mt-[9px] mr-[65px] ml-[94px] rounded-[2px] border border-[#f0f0f0] bg-white shadow-[4px_4px_3px_rgba(0,0,0,0.06)]">
        <div className="grid grid-cols-[750fr_1492fr]">
          <div>
            <Controls />
            <EvolutionChart />
          </div>
          <div>
            <ModeBar />
            <PhylogenyChart />
          </div>
        </div>
        <div className="grid grid-cols-[1125fr_1117fr]">
          <MapChart />
          <DistributionChart />
        </div>
      </main>
    </div>
  );
}
